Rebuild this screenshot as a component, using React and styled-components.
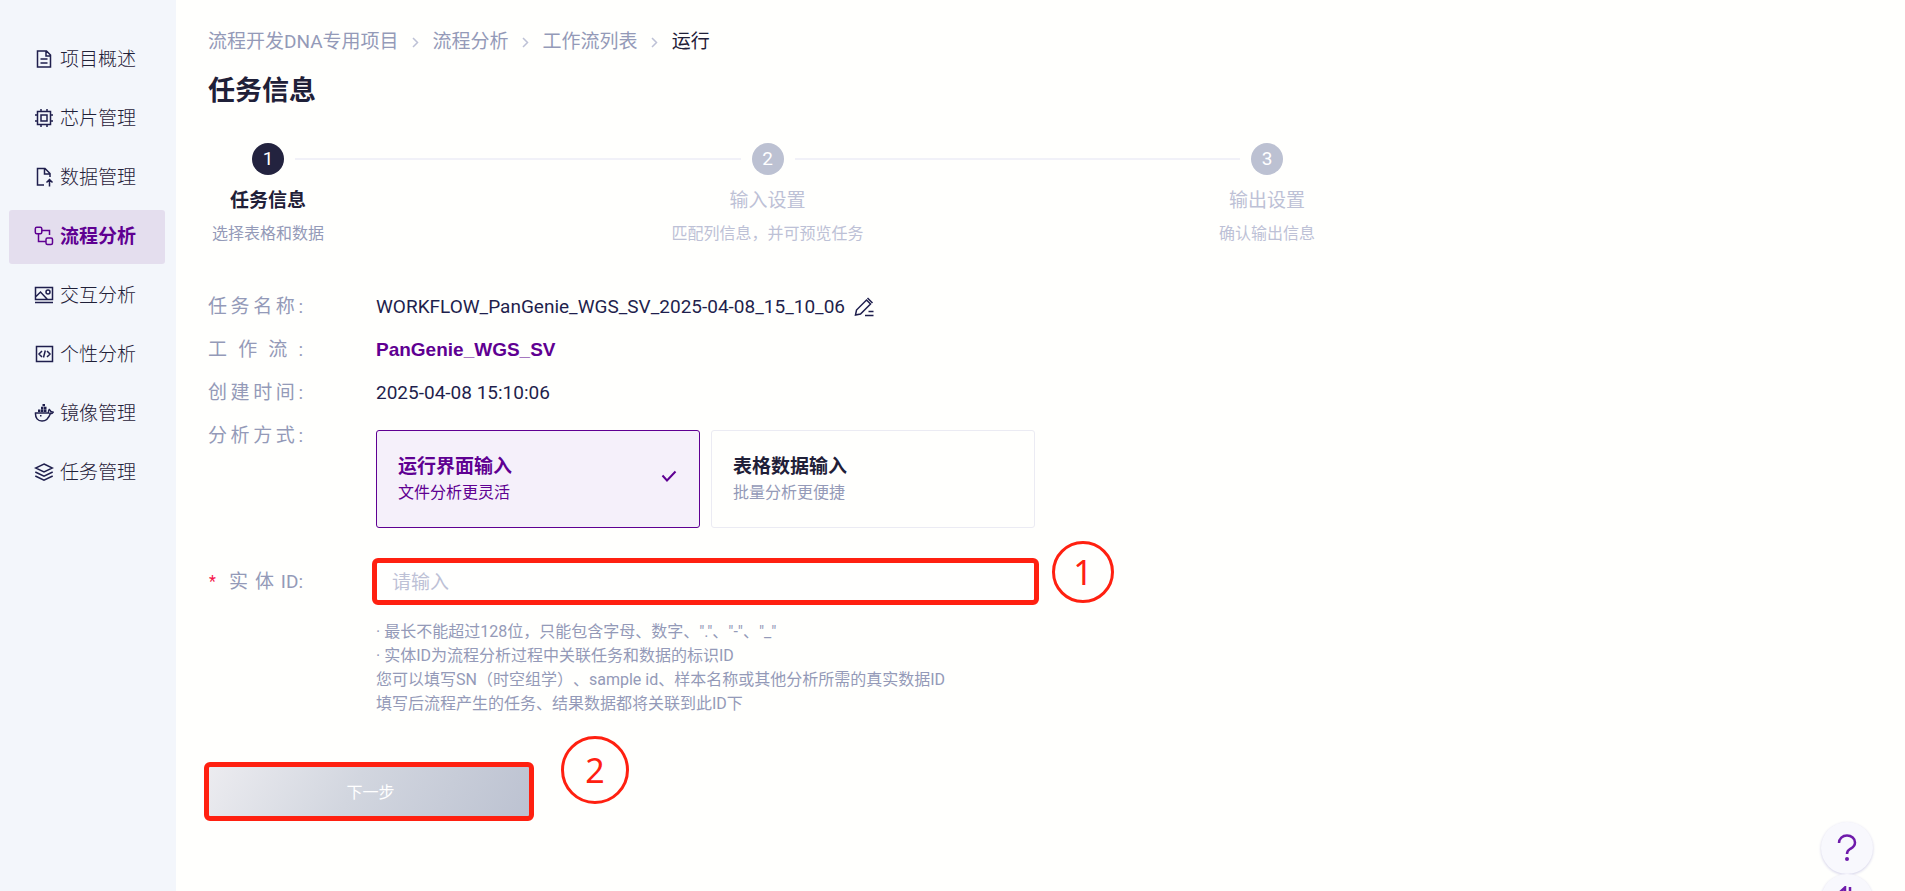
import React, { useState } from "react";
import styled, { createGlobalStyle, css } from "styled-components";

const color = {
  ink: "#1f1f4d",
  dark: "#1f2038",
  muted: "#949ab8",
  faint: "#bdc1d6",
  line: "#f1f1f8",
  purple: "#5f0092",
  red: "#ff2010",
};

const GlobalStyle = createGlobalStyle`
  *, *::before, *::after { box-sizing: border-box; }
  body {
    margin: 0;
    background: #fffffd;
    color: ${color.dark};
    font-family: Roboto, "Noto Sans CJK SC", sans-serif;
    font-size: 19px;
    line-height: 24px;
    text-spacing-trim: space-all;
  }
  button, input { font: inherit; }
`;

const Page = styled.div`
  display: flex;
  min-height: 100vh;
`;

const Sidebar = styled.nav`
  flex: none;
  width: 176px;
  padding: 33px 11px 32px 9px;
  background: #f3f6fb;
  display: flex;
  flex-direction: column;
  gap: 5px;
`;

const NavLink = styled.a`
  display: flex;
  align-items: center;
  gap: 6px;
  height: 54px;
  padding-left: 25px;
  border-radius: 3px;
  color: ${color.dark};
  font-weight: 300;
  text-decoration: none;
  white-space: nowrap;
  svg { margin-bottom: 2px; color: ${color.ink}; }
  ${(p) =>
    p.$active &&
    css`
      background: #e4deee;
      color: ${color.purple};
      font-weight: 700;
      svg { color: ${color.purple}; }
    `}
`;

const Icon = styled.svg`
  flex: none;
  width: ${(p) => p.$size || 20}px;
  height: ${(p) => p.$size || 20}px;
  fill: none;
  stroke: currentColor;
  stroke-width: 1.5;
`;

const Main = styled.main`
  flex: 1;
  min-width: 0;
  padding: 30px 32px 48px;
`;

const Crumbs = styled.ol`
  display: flex;
  align-items: center;
  list-style: none;
  margin: 0;
  padding: 0;
`;

const Crumb = styled.li`
  display: flex;
  align-items: center;
  color: ${color.dark};
  a { color: ${color.muted}; text-decoration: none; }
  svg { margin: 0 12px 0 11px; color: ${color.faint}; }
`;

const Title = styled.h1`
  margin: 19px 0 34px;
  font-size: 27px;
  line-height: 36px;
  font-weight: 700;
`;

const Steps = styled.ol`
  display: flex;
  max-width: 1119px;
  margin: 0 0 39px;
  padding: 0;
  list-style: none;
`;

const Step = styled.li`
  flex: ${(p) => (p.$last ? "none" : "1")};
  color: ${(p) => (p.$active ? color.dark : color.faint)};
`;

const StepHead = styled.div`
  display: flex;
  align-items: center;
  padding-left: 44px;
`;

const StepDot = styled.span`
  flex: none;
  width: 32px;
  border-radius: 50%;
  background: ${(p) => (p.$active ? "#23233f" : "#bcc1d2")};
  color: #fff;
  line-height: 32px;
  text-align: center;
`;

const StepLine = styled.span`
  flex: 1;
  height: 2px;
  margin: 0 -33px 0 11px;
  background: ${color.line};
`;

const StepBody = styled.div`
  display: flex;
  flex-direction: column;
  align-items: center;
  gap: 9px;
  width: 120px;
  margin-top: 14px;
  white-space: nowrap;
`;

const StepTitle = styled.span`
  font-weight: ${(p) => (p.$active ? 700 : 400)};
`;

const StepNote = styled.span`
  color: ${(p) => (p.$active ? color.muted : color.faint)};
  font-size: 16px;
`;

const Row = styled.div`
  display: flex;
  align-items: flex-start;
  line-height: 43px;
`;

const EntityRow = styled(Row)`
  margin-top: 34px;
  line-height: 40px;
`;

const LabelCell = styled.div`
  flex: none;
  display: flex;
  width: 95px;
  margin-right: 73px;
`;

const labelText = css`
  flex: 1;
  color: ${color.muted};
  text-align: justify;
  text-align-last: justify;
`;

const Caption = styled.span`
  ${labelText}
`;

const FieldLabel = styled.label`
  ${labelText}
`;

const Required = styled.span`
  width: 21px;
  padding-left: 1px;
  color: #f5154a;
  font-size: 16px;
`;

const Value = styled.span`
  color: ${color.ink};
`;

const WorkflowLink = styled.a`
  color: ${color.purple};
  font-family: "Liberation Sans", sans-serif;
  font-weight: 700;
  text-decoration: none;
`;

const EditButton = styled.button`
  display: flex;
  align-self: center;
  margin-left: 9px;
  padding: 0;
  border: 0;
  background: none;
  color: ${color.ink};
  cursor: pointer;
`;

const Modes = styled.div`
  flex: 0 1 659px;
  display: grid;
  grid-template-columns: 1fr 1fr;
  gap: 11px;
  margin-top: 16px;
`;

const ModeCard = styled.label`
  display: flex;
  align-items: center;
  justify-content: space-between;
  height: 98px;
  padding: 2px 22px 0 21px;
  border: 1px solid ${(p) => (p.$checked ? color.purple : "#ebebf3")};
  border-radius: 3px;
  background: ${(p) => (p.$checked ? "#f5f0fa" : "transparent")};
  color: ${(p) => (p.$checked ? color.purple : color.dark)};
  line-height: 26px;
  cursor: pointer;
  svg { margin-bottom: 8px; }
`;

const ModeRadio = styled.input`
  position: absolute;
  opacity: 0;
  pointer-events: none;
`;

const ModeText = styled.span`
  display: flex;
  flex-direction: column;
`;

const ModeNote = styled.span`
  color: ${(p) => (p.$checked ? color.purple : color.muted)};
  font-size: 16px;
`;

const Field = styled.div`
  flex: 0 1 659px;
`;

const Anchor = styled.div`
  position: relative;
  width: ${(p) => p.$width};
`;

const marked = css`
  border: 0;
  border-radius: 2px;
  outline: 5px solid ${color.red};
  outline-offset: -1px;
`;

const TextInput = styled.input`
  display: block;
  width: 100%;
  height: 39px;
  padding: 2px 16px 0;
  background: #fffffe;
  color: ${color.dark};
  ${marked}
  &::placeholder { color: ${color.faint}; opacity: 1; }
`;

const NextButton = styled.button`
  display: block;
  width: 100%;
  height: 51px;
  padding: 3px 0 0 3px;
  background: linear-gradient(120deg, #ececf0, #d2d6df 45%, #bcc2d1);
  color: #fff;
  font-size: 16px;
  ${marked}
`;

const Badge = styled.span`
  position: absolute;
  left: 100%;
  bottom: ${(p) => p.$bottom}px;
  width: ${(p) => p.$size}px;
  height: ${(p) => p.$size}px;
  margin-left: ${(p) => p.$gap}px;
  border: 3px solid ${color.red};
  border-radius: 50%;
  color: ${color.red};
  display: flex;
  align-items: center;
  justify-content: center;
  font-family: "Noto Sans", sans-serif;
  font-size: 34px;
`;

const Hints = styled.div`
  margin-top: 19px;
  color: ${color.muted};
  font-size: 16px;
  line-height: 24px;
  p { margin: 0; }
`;

const Actions = styled.div`
  margin-top: 50px;
`;

const FloatStack = styled.div`
  position: fixed;
  right: 32px;
  bottom: -35px;
  display: flex;
  flex-direction: column;
`;

const FloatButton = styled.button`
  display: flex;
  align-items: center;
  justify-content: center;
  width: 52px;
  height: 52px;
  padding: 0;
  border: 0;
  border-radius: 50%;
  background: #f8f8fd;
  box-shadow: 0 1px 3px #d2d0e8;
  color: #6f1bab;
`;

const icons = {
  overview: <path d="M3.500 2h9l4 4v12h-13zM12 2v5h4.500M6.500 10h7M6.500 14h7" />,
  chip: (
    <path d="M3.500 3.500h13v13h-13zM7 7h6v6H7zM7 1v2.500M13 1v2.500M7 16.500V19M13 16.500V19M1 7h2.500M1 13h2.500M16.500 7H19M16.500 13H19" />
  ),
  data: <path d="M10 18H3.500V1.500h7.500l5 5V10M10.500 2v5h5M15.500 19.500v-7M12.500 15.500l3-3 3 3" />,
  flow: (
    <>
      <rect x="1.300" y="1.300" width="6.500" height="6.500" rx="1.500" />
      <rect x="12" y="12" width="6.500" height="6.500" rx="1.500" />
      <path d="M8 4.500h7.500V9M4.500 8v7.500H12" />
    </>
  ),
  interact: (
    <>
      <path d="M1.500 2.500h17v12h-17zM1 17.500h18M2 11.500L6.500 7l7 7.500" />
      <circle cx="14" cy="7" r="2" />
    </>
  ),
  custom: <path d="M2.500 2.500h16v15h-16zM8 7l-3 3 3 3M13 7l3 3-3 3M11.300 6.500l-1.800 7" />,
  image: (
    <>
      <path d="M1.500 10h13.300c-.5-1.300-.3-2.500.5-3.500 1 .7 1.500 1.300 1.600 2.300.8-.2 1.700 0 2.300.3-.5 1-1.600 1.500-2.900 1.600C14.800 15 12 18 8 18c-4.300 0-6.800-3-6.500-8z" />
      <path fill="currentColor" stroke="none" d="M4 6.500h2.500V9H4zM7 6.500h2.500V9H7zM10 6.500h2.500V9H10zM7 3.700h2.500v2.500H7zM10 3.700h2.500v2.500H10zM8.500 1h2.500v2.200H8.500zM6 12h1.500v1.500H6z" />
    </>
  ),
  tasks: <path d="M10 2l8.500 4-8.500 4-8.500-4zM1.300 10l8.700 4.200L18.700 10M1.300 14l8.700 4.200L18.700 14" />,
};

const navItems = [
  ["overview", "项目概述"],
  ["chip", "芯片管理"],
  ["data", "数据管理"],
  ["flow", "流程分析"],
  ["interact", "交互分析"],
  ["custom", "个性分析"],
  ["image", "镜像管理"],
  ["tasks", "任务管理"],
];

const crumbs = ["流程开发DNA专用项目", "流程分析", "工作流列表", "运行"];

const steps = [
  ["任务信息", "选择表格和数据"],
  ["输入设置", "匹配列信息，并可预览任务"],
  ["输出设置", "确认输出信息"],
];

const modes = [
  ["运行界面输入", "文件分析更灵活"],
  ["表格数据输入", "批量分析更便捷"],
];

const hints = [
  '· 最长不能超过128位，只能包含字母、数字、"."、"-"、"_"',
  "· 实体ID为流程分析过程中关联任务和数据的标识ID",
  "您可以填写SN（时空组学）、sample id、样本名称或其他分析所需的真实数据ID",
  "填写后流程产生的任务、结果数据都将关联到此ID下",
];

export default function App() {
  const [mode, setMode] = useState(0);
  return (
    <>
      <GlobalStyle />
      <Page>
        <Sidebar>
          {navItems.map(([key, text]) => (
            <NavLink key={key} href={`#${key}`} $active={key === "flow"}>
              <Icon viewBox="0 0 20 20">{icons[key]}</Icon>
              {text}
            </NavLink>
          ))}
        </Sidebar>
        <Main>
          <Crumbs>
            {crumbs.map((text, i) =>
              i < crumbs.length - 1 ? (
                <Crumb key={text}>
                  <a href="#crumb">{text}</a>
                  <Icon viewBox="0 0 11 11" $size={11}><path d="M3 1l4.500 4.500L3 10" /></Icon>
                </Crumb>
              ) : (
                <Crumb key={text} aria-current="page">{text}</Crumb>
              )
            )}
          </Crumbs>
          <Title>任务信息</Title>

          <Steps>
            {steps.map(([title, note], i) => (
              <Step key={title} $active={i === 0} $last={i === steps.length - 1}>
                <StepHead>
                  <StepDot $active={i === 0}>{i + 1}</StepDot>
                  {i < steps.length - 1 && <StepLine />}
                </StepHead>
                <StepBody>
                  <StepTitle $active={i === 0}>{title}</StepTitle>
                  <StepNote $active={i === 0}>{note}</StepNote>
                </StepBody>
              </Step>
            ))}
          </Steps>

          <form onSubmit={(e) => e.preventDefault()}>
            <Row>
              <LabelCell><Caption>任务名称:</Caption></LabelCell>
              <Value>WORKFLOW_PanGenie_WGS_SV_2025-04-08_15_10_06</Value>
              <EditButton type="button" aria-label="编辑">
                <Icon viewBox="0 0 20 20">
                  <path d="M1.500 18l1-5L12.500 3l4 4L6.500 17zM13.500 1l5 5M11 18.500h8.500M14.500 14.500h5" />
                </Icon>
              </EditButton>
            </Row>
            <Row>
              <LabelCell><Caption>工作流:</Caption></LabelCell>
              <WorkflowLink href="#workflow">PanGenie_WGS_SV</WorkflowLink>
            </Row>
            <Row>
              <LabelCell><Caption>创建时间:</Caption></LabelCell>
              <Value>2025-04-08 15:10:06</Value>
            </Row>
            <Row>
              <LabelCell><Caption>分析方式:</Caption></LabelCell>
              <Modes role="radiogroup" aria-label="分析方式">
                {modes.map(([title, note], i) => (
                  <ModeCard key={title} $checked={mode === i}>
                    <ModeRadio type="radio" name="mode" checked={mode === i} onChange={() => setMode(i)} />
                    <ModeText>
                      <b>{title}</b>
                      <ModeNote $checked={mode === i}>{note}</ModeNote>
                    </ModeText>
                    {mode === i && (
                      <Icon viewBox="0 0 16 16" $size={16}><path strokeWidth="2" d="M1.500 7.500l4.500 5L14.500 3.500" /></Icon>
                    )}
                  </ModeCard>
                ))}
              </Modes>
            </Row>
            <EntityRow>
              <LabelCell>
                <Required>*</Required>
                <FieldLabel htmlFor="entity">实体ID:</FieldLabel>
              </LabelCell>
              <Field>
                <Anchor $width="100%">
                  <TextInput id="entity" placeholder="请输入" />
                  <Badge $size={62} $gap={17} $bottom={-2}>1</Badge>
                </Anchor>
                <Hints>
                  {hints.map((text) => <p key={text}>{text}</p>)}
                </Hints>
              </Field>
            </EntityRow>
            <Actions>
              <Anchor $width="322px">
                <NextButton>下一步</NextButton>
                <Badge $size={68} $gap={31} $bottom={13}>2</Badge>
              </Anchor>
            </Actions>
          </form>
        </Main>
      </Page>
      <FloatStack>
        <FloatButton aria-label="帮助">
          <Icon viewBox="0 0 28 28" $size={28}>
            <path strokeWidth="2.500" d="M6 9c0-4.500 3.500-7.500 8-7.500s8 3 8 7-2.500 5-5 6.500-3 2.500-3 5" />
            <circle cx="14" cy="25" r="2" fill="currentColor" stroke="none" />
          </Icon>
        </FloatButton>
        <FloatButton aria-label="切换">
          <Icon viewBox="0 0 28 28" $size={28}>
            <path strokeWidth="2.500" d="M5 8l7-6.500V26M17 1v25l6-6" />
          </Icon>
        </FloatButton>
      </FloatStack>
    </>
  );
}
